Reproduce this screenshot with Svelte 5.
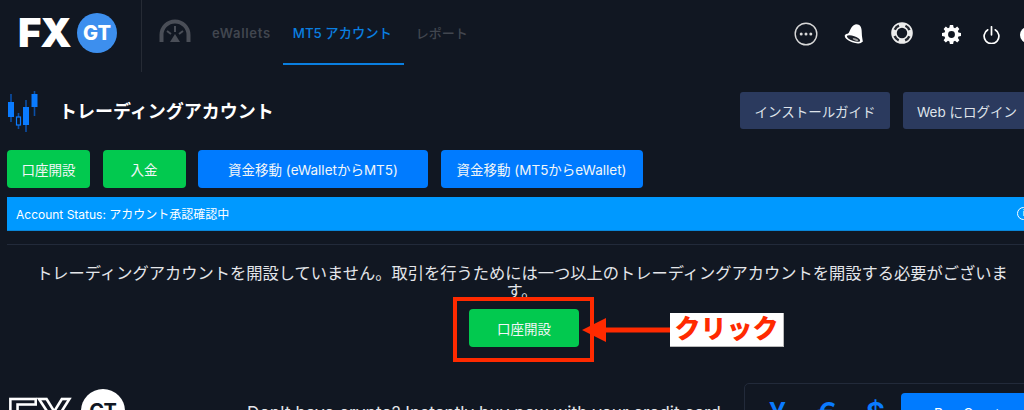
<script lang="ts">
	const NAV = [
		{ label: 'eWallets', active: false, latin: true },
		{ label: 'MT5 アカウント', active: true, latin: false },
		{ label: 'レポート', active: false, latin: false }
	];
	const ACTIONS = [
		{ label: '口座開設', color: 'green', width: 83 },
		{ label: '入金', color: 'green', width: 83 },
		{ label: '資金移動 (eWalletからMT5)', color: 'blue', width: 230 },
		{ label: '資金移動 (MT5からeWallet)', color: 'blue', width: 202 }
	];
</script>

<div class="page">
	<header class="topbar">
		<div class="brand">
			<span class="fx">FX</span>
			<span class="gt">GT</span>
		</div>
		<nav class="nav">
			<svg class="gauge" width="32" height="23" viewBox="0 0 32 23" fill="none">
				<path d="M2.500 23v-7a13.500 13.500 0 0 1 27 0v7" stroke="#4a4e57" stroke-width="4" />
				<path d="M16 7v6M8 12l4 3M24 12l-4 3" stroke="#4a4e57" stroke-width="2" />
				<path d="M11 23l5-8 5 8z" fill="#4a4e57" />
			</svg>
			{#each NAV as item (item.label)}
				<a class="tab" class:active={item.active} class:latin={item.latin} href="#/">{item.label}</a>
			{/each}
		</nav>
		<div class="tools">
			<svg width="24" height="24" viewBox="0 0 24 24" fill="none">
				<circle cx="12" cy="12" r="10.800" stroke="#d8d8d8" stroke-width="1.400" />
				<circle cx="7.200" cy="12" r="1.500" fill="#d8d8d8" />
				<circle cx="12" cy="12" r="1.500" fill="#d8d8d8" />
				<circle cx="16.800" cy="12" r="1.500" fill="#d8d8d8" />
			</svg>
			<svg class="bell" width="20" height="20" viewBox="0 0 20 20" fill="none">
				<path d="M3 11C6 9 6 2 12 .3c5.500 0 5.800 5 5.800 9 0 3 .7 5.500 1 8.500-2 1-6 0-9-1.500z" fill="#fff" />
				<ellipse cx="9.500" cy="14.500" rx="9.200" ry="4" transform="rotate(20 9.500 14.500)" fill="#fff" />
				<ellipse cx="9.500" cy="14.500" rx="7" ry="2.500" transform="rotate(20 9.500 14.500)" fill="#1c2029" />
				<ellipse cx="11.500" cy="15.500" rx="3" ry="1" transform="rotate(20 11.500 15.500)" fill="#a0a0a0" />
			</svg>
			<svg class="ring" width="22" height="22" viewBox="0 0 22 22" fill="none">
				<circle cx="11" cy="11" r="8" stroke="#ececec" stroke-width="5.600" />
				<circle cx="11" cy="11" r="8" stroke="#23272f" stroke-width="2.400" stroke-dasharray="6 6.570" stroke-dashoffset="-3.280" />
			</svg>
			<svg class="gear" width="19" height="19" viewBox="0 0 20 20">
				<path fill="#fff" fill-rule="evenodd" d="M8.300 0h3.400l.5 2.700 1.500.6L16 1.700l2.300 2.400-1.600 2.200.6 1.500 2.700.5v3.400l-2.700.5-.6 1.500 1.600 2.300-2.300 2.300-2.300-1.600-1.500.6-.5 2.700H8.300l-.5-2.700-1.500-.6L4 18.300 1.700 16l1.600-2.300-.6-1.500L0 11.700V8.300l2.700-.5.600-1.500-1.600-2.200L4 1.700l2.300 1.600 1.500-.6zM10 6.400a3.600 3.600 0 1 0 0 7.200 3.600 3.600 0 0 0 0-7.200z" />
			</svg>
			<svg class="power" width="17" height="18" viewBox="0 0 17 18" fill="none">
				<path d="M4.800 3.800a7.400 7.400 0 1 0 7.400 0M8.500 .8v8" stroke="#fff" stroke-width="1.700" stroke-linecap="round" />
			</svg>
			<span class="avatar"></span>
		</div>
	</header>

	<section class="title-row">
		<svg width="32" height="41" viewBox="0 0 32 41" fill="none">
			<path d="M4 3v28M11.500 22v16M19 9v32M27.500 0v25" stroke="#0a4fa8" stroke-width="1.600" />
			<rect x="1" y="11" width="6" height="15" fill="#0a7bff" />
			<rect x="9.500" y="26" width="4" height="8" fill="#111722" stroke="#0a7bff" stroke-width="1.200" />
			<rect x="16" y="16" width="6" height="18" fill="#0a7bff" />
			<rect x="24.500" y="3" width="6" height="13" fill="#0a7bff" />
		</svg>
		<h1>トレーディングアカウント</h1>
		<div class="guides">
			<button class="guide first">インストールガイド</button>
			<button class="guide second">Web にログイン</button>
		</div>
	</section>

	<section class="actions">
		{#each ACTIONS as a (a.label)}
			<button class="btn {a.color}" style="width:{a.width}px">{a.label}</button>
		{/each}
	</section>

	<div class="alert">
		<span>Account Status: アカウント承認確認中</span>
		<span class="info">i</span>
	</div>
	<div class="rule"></div>

	<p class="message">トレーディングアカウントを開設していません。取引を行うためには一つ以上のトレーディングアカウントを開設する必要がございます。</p>
	<div class="cta-row">
		<button class="btn green cta">口座開設</button>
	</div>

	<section class="footer">
		<div class="brand-alt">
			<span class="fx-alt">FX</span>
			<span class="gt-alt">GT</span>
		</div>
		<p class="buy-text">Don't have crypto? Instantly buy now with your credit card</p>
		<div class="buy-card">
			<span class="cur first-cur">¥</span>
			<span class="cur">€</span>
			<span class="cur">$</span>
			<button class="buy">Buy Crypto</button>
		</div>
	</section>

	<div class="mark-box"></div>
	<svg class="mark-arrow" width="88" height="24" viewBox="0 0 88 24">
		<path d="M0 12 24 0v9.500h64v5H24V24z" fill="#ff2a00" />
	</svg>
	<div class="mark-label">クリック</div>
</div>

<style>
	:global(body) {
		margin: 0;
		background: #111722;
		overflow: hidden;
	}
	.page {
		position: relative;
		width: 1024px;
		height: 410px;
		overflow: hidden;
		background: #111722;
		font-family: Inter, 'Noto Sans CJK JP', sans-serif;
		color: #fff;
	}
	.topbar {
		display: flex;
		align-items: stretch;
		height: 72px;
	}
	.brand {
		width: 142px;
		box-sizing: border-box;
		border-right: 1px solid #262b35;
		display: flex;
		align-items: center;
		padding: 0 0 6px 18px;
	}
	.fx {
		font: 900 40px/1 Inter, sans-serif;
		letter-spacing: -1px;
		width: 59px;
	}
	.gt {
		width: 40px;
		height: 40px;
		border-radius: 50%;
		background: #3d8fee;
		display: flex;
		align-items: center;
		justify-content: center;
		font: 800 20px/1 Inter, sans-serif;
	}
	.nav {
		display: flex;
		align-items: flex-start;
		padding-left: 17px;
	}
	.gauge {
		margin: 19px 9px 0 0;
	}
	.tab {
		display: block;
		height: 65px;
		box-sizing: border-box;
		padding: 25px 12px 0;
		border-bottom: 2px solid transparent;
		color: #41464f;
		font-size: 13px;
		font-weight: 500;
		line-height: 16px;
		text-decoration: none;
		white-space: nowrap;
	}
	.tab.latin {
		font-weight: 600;
		letter-spacing: 0.7px;
	}
	.tab.active {
		color: #0a7fe0;
		border-color: #0a7fe0;
		padding: 25px 12px 0 10px;
		font-size: 13.300px;
	}
	.tools {
		margin-left: auto;
		display: flex;
		align-items: center;
		height: 67px;
	}
	.bell {
		margin: 1px 0 0 26px;
	}
	.ring {
		margin: -1px 0 0 27px;
	}
	.gear {
		margin: 2px 0 0 29px;
	}
	.power {
		margin: 2px 0 0 22px;
	}
	.avatar {
		width: 16px;
		height: 16px;
		border-radius: 50%;
		background: #fff;
		margin: 3px -12px 0 20px;
		flex-shrink: 0;
	}
	.title-row {
		display: flex;
		align-items: center;
		height: 41px;
		padding: 19px 0 0 7px;
	}
	.title-row h1 {
		margin: 0 0 4px 20px;
		font-size: 18px;
		font-weight: 700;
		white-space: nowrap;
	}
	.guides {
		margin: -2px -7px 0 auto;
		display: flex;
		gap: 13px;
	}
	.guide {
		height: 37px;
		border: 0;
		border-radius: 3px;
		background: #2b3a5e;
		color: #dfe3ea;
		font-family: inherit;
		font-size: 13.500px;
		padding: 0;
	}
	.guide.first {
		width: 150px;
	}
	.guide.second {
		width: 128px;
	}
	.actions {
		display: flex;
		gap: 12.500px;
		padding: 18px 0 0 7px;
	}
	.btn {
		height: 38px;
		border: 0;
		border-radius: 4px;
		color: #f2f6f8;
		font-family: inherit;
		font-size: 13.500px;
		padding: 0;
		white-space: nowrap;
	}
	.green {
		background: #02c94f;
	}
	.blue {
		background: #007bff;
	}
	.alert {
		display: flex;
		align-items: center;
		justify-content: space-between;
		box-sizing: border-box;
		height: 34px;
		margin: 9px -12px 0 7px;
		padding: 0 0 0 9px;
		background: #0099ff;
		border-bottom: 1px solid #0a86d8;
		font-size: 12px;
	}
	.info {
		width: 13px;
		height: 13px;
		margin-right: 6px;
		box-sizing: border-box;
		border: 1.500px solid #fff;
		border-radius: 50%;
		font-size: 9px;
		line-height: 10px;
		text-align: center;
	}
	.rule {
		height: 1px;
		margin: 13px 0 0 7px;
		background: #222a3a;
	}
	.message {
		width: 1000px;
		margin: 19px 0 0 22px;
		color: #e4e6ea;
		font-size: 16.250px;
		line-height: 18px;
		text-align: center;
	}
	.cta-row {
		display: flex;
		padding: 9px 0 0 469px;
	}
	.cta {
		width: 110px;
	}
	.footer {
		display: flex;
		margin-top: 36px;
		padding-left: 7px;
		height: 60px;
	}
	.brand-alt {
		display: flex;
		flex-shrink: 0;
		width: 240px;
		align-items: flex-start;
		padding-top: 6px;
	}
	.fx-alt {
		font: 900 50px/1 'Liberation Sans', sans-serif;
		color: transparent;
		-webkit-text-stroke: 2.500px #fff;
		width: 74px;
		margin-top: 3px;
	}
	.gt-alt {
		width: 44px;
		height: 44px;
		border-radius: 50%;
		background: #fff;
		color: #111722;
		display: flex;
		align-items: center;
		justify-content: center;
		font: 700 20px/1 Inter, sans-serif;
	}
	.buy-text {
		flex-shrink: 0;
		margin: 20px 0 0;
		width: 497px;
		font-size: 17.200px;
		line-height: 20px;
		color: #e4e6ea;
		white-space: nowrap;
	}
	.buy-card {
		flex-shrink: 0;
		display: flex;
		align-items: flex-start;
		width: 320px;
		box-sizing: border-box;
		border: 1px solid #222a3a;
		border-radius: 5px;
		padding-top: 9px;
		height: 60px;
	}
	.cur {
		color: #0a7bff;
		font-size: 30px;
		line-height: 40px;
		font-weight: 600;
		width: 49px;
		text-align: center;
	}
	.first-cur {
		margin-left: 8px;
	}
	.buy {
		margin-left: 1px;
		width: 140px;
		height: 40px;
		border: 0;
		border-radius: 4px;
		background: #007bff;
		color: #fff;
		font-family: inherit;
		font-size: 14px;
	}
	/* annotations drawn over the screenshot */
	.mark-box {
		position: absolute;
		left: 453px;
		top: 297px;
		width: 141px;
		height: 65px;
		box-sizing: border-box;
		border: 4.500px solid #ff2a00;
	}
	.mark-arrow {
		position: absolute;
		left: 582px;
		top: 318px;
	}
	.mark-label {
		position: absolute;
		left: 670px;
		top: 313px;
		width: 114px;
		height: 34px;
		box-sizing: border-box;
		border-right: 1px solid #bbb;
		border-bottom: 1px solid #bbb;
		background: #fff;
		color: #ff2a00;
		font-weight: 900;
		font-size: 26px;
		line-height: 32px;
		text-align: center;
		white-space: nowrap;
		overflow: hidden;
	}
</style>
